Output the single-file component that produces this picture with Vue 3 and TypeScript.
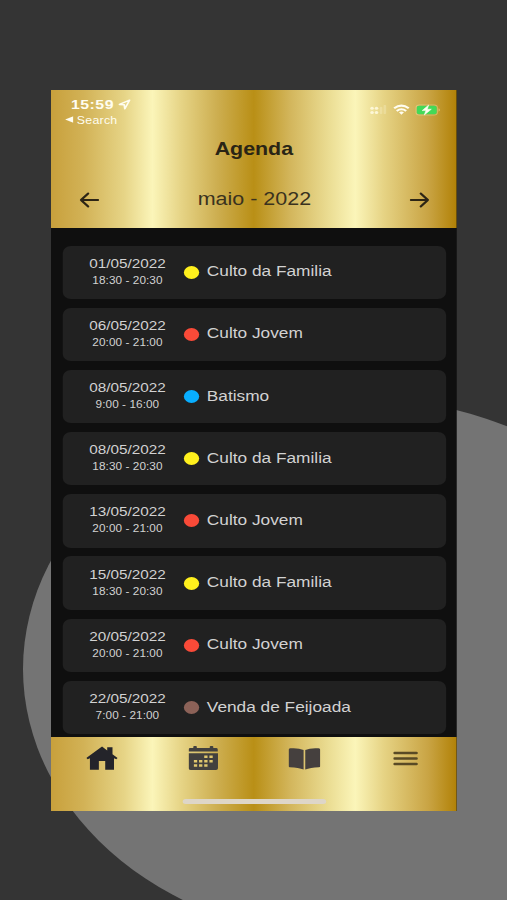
<script setup lang="ts">
interface AgendaEvent {
  date: string
  time: string
  title: string
  kind: 'family' | 'youth' | 'baptism' | 'sale'
}

const events: AgendaEvent[] = [
  { date: '01/05/2022', time: '18:30 - 20:30', title: 'Culto da Familia', kind: 'family' },
  { date: '06/05/2022', time: '20:00 - 21:00', title: 'Culto Jovem', kind: 'youth' },
  { date: '08/05/2022', time: '9:00 - 16:00', title: 'Batismo', kind: 'baptism' },
  { date: '08/05/2022', time: '18:30 - 20:30', title: 'Culto da Familia', kind: 'family' },
  { date: '13/05/2022', time: '20:00 - 21:00', title: 'Culto Jovem', kind: 'youth' },
  { date: '15/05/2022', time: '18:30 - 20:30', title: 'Culto da Familia', kind: 'family' },
  { date: '20/05/2022', time: '20:00 - 21:00', title: 'Culto Jovem', kind: 'youth' },
  { date: '22/05/2022', time: '7:00 - 21:00', title: 'Venda de Feijoada', kind: 'sale' },
]
</script>

<template>
  <div class="stage">
    <div class="disc"></div>
    <main class="phone">
      <header class="top gold">
        <div class="status">
          <div class="status-left">
            <div class="clock">
              <span>15:59</span>
              <svg width="11" height="11" viewBox="0 0 11 11"><path d="M1.2 5.4 9.8 1.2 5.8 9.8 5.3 5.8Z" fill="none" stroke="#fffdf0" stroke-width="1.5" stroke-linejoin="round" /></svg>
            </div>
            <div class="back">
              <svg width="7" height="7" viewBox="0 0 7 7"><path d="M0 3.5 7 .3v6.4z" fill="#fffdf0" /></svg>
              <span>Search</span>
            </div>
          </div>
          <svg class="signals" width="60" height="14" viewBox="0 0 60 14">
            <g fill="#fffbe2" opacity=".85">
              <circle cx="2" cy="5.3" r="1.5" /><circle cx="5.8" cy="5.3" r="1.5" />
              <circle cx="2" cy="9.5" r="1.5" /><circle cx="5.8" cy="9.5" r="1.5" />
              <g opacity=".3"><rect x="8.6" y="4" width="2.2" height="7" rx=".7" /><rect x="11.8" y="2" width="2.2" height="9" rx=".7" /></g>
            </g>
            <g fill="none" stroke="#fffdf0" stroke-width="2">
              <path d="M20.800 5.200q6.200-5.200 12.400 0M23 7.900q4-3.400 8 0" />
            </g>
            <path d="M24.900 9.300q2.100-1.600 4.200 0L27 11.700z" fill="#fffdf0" />
            <rect x="39.500" y="2" width="18" height="10" rx="2.800" fill="none" stroke="#f3e9b4" stroke-opacity=".4" />
            <rect x="40" y="2.700" width="17" height="8.600" rx="2" fill="#43d957" />
            <path d="M58.600 5.300q2 1.700 0 3.400z" fill="#f3e9b4" opacity=".6" />
            <path d="M50.200 2 44.600 7.600h3.200L46.400 12l6-5.800h-3.400z" fill="#fffdf0" stroke="#fffdf0" stroke-width=".5" />
          </svg>
        </div>
        <h1>Agenda</h1>
        <div class="month">
          <svg width="17" height="16" viewBox="0 0 17 16"><path d="M16 8H1.500M7.600 1.500 1.500 8 7.600 14.500" /></svg>
          <span>maio - 2022</span>
          <svg width="17" height="16" viewBox="0 0 17 16"><path d="M1 8h14.500M9.400 1.500 15.500 8 9.400 14.500" /></svg>
        </div>
      </header>

      <section class="list">
        <article v-for="(event, i) in events" :key="i" class="card">
          <div class="when">
            <div class="date">{{ event.date }}</div>
            <div class="time">{{ event.time }}</div>
          </div>
          <i class="dot" :class="event.kind"></i>
          <span class="title">{{ event.title }}</span>
        </article>
      </section>

      <nav class="tabs gold">
        <div class="icons">
          <div class="tab">
            <svg width="27" height="25" viewBox="0 0 27 25"><path fill="#24242a" d="M13.400.6 0 12.100l1.200 1.100 1.900-1v11.500h7.600v-8.600h5.400v8.600h7.500V12.200l1.900 1 1.100-1.100-4.300-3.800V1.200h-4.500v3.200z" /></svg>
          </div>
          <div class="tab">
            <svg width="25" height="25" viewBox="0 0 25 25">
              <path fill="#42403e" d="M1.600 2H4V.8q0-.8.8-.8h1.400q.8 0 .8.8V2h11V.8q0-.8.8-.8h1.400q.8 0 .8.8V2h2.400q1.400 0 1.400 1.400v2.200H0V3.400Q0 2 1.600 2ZM0 7.300h25v15q0 1.700-1.700 1.700H1.700Q0 24 0 22.300Z" />
              <g fill="#e0c76e">
                <path d="M13.300 9.600h2.800v2.500h-2.800zM17.700 9.600h2.800v2.500h-2.800zM4.500 13.900h2.800v2.500H4.500zM8.900 13.900h2.800v2.500H8.900zM13.300 13.900h2.800v2.500h-2.800zM17.700 13.900h2.800v2.500h-2.800zM4.500 18.200h2.800v2.500H4.500zM8.900 18.200h2.800v2.500H8.900zM13.300 18.200h2.800v2.500h-2.800z" />
              </g>
            </svg>
          </div>
          <div class="tab">
            <svg width="27" height="22" viewBox="0 0 27 22"><path fill="#45403e" d="M1.500.3Q8.500-.3 12.800 2v19.500Q8.500 19.500 1.200 19.200 0 19.200 0 18V1.700Q0 .4 1.500.3ZM25.500.3Q18.500-.3 14.200 2v19.500q4.300-2 11.600-2.300Q27 19.200 27 18V1.700Q27 .4 25.500.3Z" /></svg>
          </div>
          <div class="tab">
            <svg width="21" height="15" viewBox="0 0 21 15"><path d="M1.200 2h18.600M1.200 7.500h18.600M1.200 13h18.600" stroke="#594a25" stroke-width="2.400" stroke-linecap="round" /></svg>
          </div>
        </div>
        <div class="home-bar"></div>
      </nav>
    </main>
  </div>
</template>

<style>
body {
  background: #343434;
}
</style>

<style scoped>
.stage {
  position: relative;
  box-sizing: border-box;
  width: 507px;
  height: 900px;
  padding: 90px 0 0 51px;
  overflow: hidden;
  background: #343434;
  font-family: "Liberation Sans", Arial, sans-serif;
}
.disc {
  position: absolute;
  left: 23px;
  top: 398px;
  width: 670px;
  height: 542px;
  border-radius: 50%;
  background: #747474;
}
/* The handset is shown widened, so everything inside shares one horizontal scale. */
.phone {
  position: relative;
  display: flex;
  flex-direction: column;
  width: 345px;
  height: 721px;
  overflow: hidden;
  background: #0f0f0f;
  transform: scaleX(1.176);
  transform-origin: 0 0;
}
.gold {
  background: linear-gradient(90deg, #c8a03c 0%, #d2b256 8%, #e6d486 18%, #fbf5b9 25%, #e6d486 32%, #cdae50 41%, #b98f16 50%, #d3b65c 59%, #ecdf96 69%, #fbf5b9 75%, #e6d384 82%, #c9a444 93%, #b18106 100%);
}
.top {
  box-sizing: border-box;
  height: 137.500px;
  flex: none;
}
.status {
  display: flex;
  justify-content: space-between;
  box-sizing: border-box;
  height: 48.500px;
  padding: 7px 14px 0 12px;
  color: #fffdf0;
}
.clock {
  display: flex;
  align-items: center;
  gap: 4px;
  height: 14px;
  padding-left: 5px;
  font-size: 13.500px;
  font-weight: 700;
  letter-spacing: .4px;
}
.clock svg {
  margin-left: -1px;
}
.back {
  display: flex;
  align-items: center;
  gap: 3px;
  height: 17px;
  font-size: 10.500px;
  letter-spacing: .2px;
}
.signals {
  margin-top: 6px;
}
h1 {
  margin: 0;
  height: 21px;
  line-height: 21px;
  text-align: center;
  font-size: 18.200px;
  font-weight: 700;
  color: #292415;
}
.month {
  display: flex;
  justify-content: space-between;
  align-items: center;
  height: 24px;
  margin-top: 27px;
  padding: 0 23px 0 24px;
  font-size: 18.300px;
  color: #3a321e;
}
.month svg {
  margin-top: 3px;
  fill: none;
  stroke: #2d2515;
  stroke-width: 1.900;
  stroke-linecap: round;
  stroke-linejoin: round;
}
.list {
  display: flex;
  flex-direction: column;
  gap: 8.800px;
  height: 509px;
  box-sizing: border-box;
  padding: 18px 9.500px 0;
  overflow: hidden;
}
.card {
  display: flex;
  align-items: center;
  flex: none;
  height: 53.400px;
  border-radius: 7px;
  background: #212121;
  color: #d2d2d2;
}
.when {
  width: 91px;
  padding-left: 10px;
  margin-top: -1px;
  text-align: center;
}
.date {
  font-size: 13px;
  line-height: 17px;
}
.time {
  font-size: 10px;
  line-height: 17px;
  letter-spacing: .06px;
}
.dot {
  width: 13px;
  height: 13px;
  margin-left: 2px;
  border-radius: 50%;
}
.family { background: #fff01d; }
.youth { background: #f94a38; }
.baptism { background: #08aeff; }
.sale { background: #8c6258; }
.title {
  margin: -2px 0 0 7px;
  font-size: 14.700px;
}
.tabs {
  flex: 1;
}
.icons {
  display: grid;
  grid-template-columns: repeat(4, 1fr);
  height: 44.500px;
}
.tab {
  display: flex;
  align-items: center;
  justify-content: center;
}
.home-bar {
  width: 122px;
  height: 5px;
  margin: 18px auto 0;
  border-radius: 3px;
  background: #ded6c8;
}
</style>
